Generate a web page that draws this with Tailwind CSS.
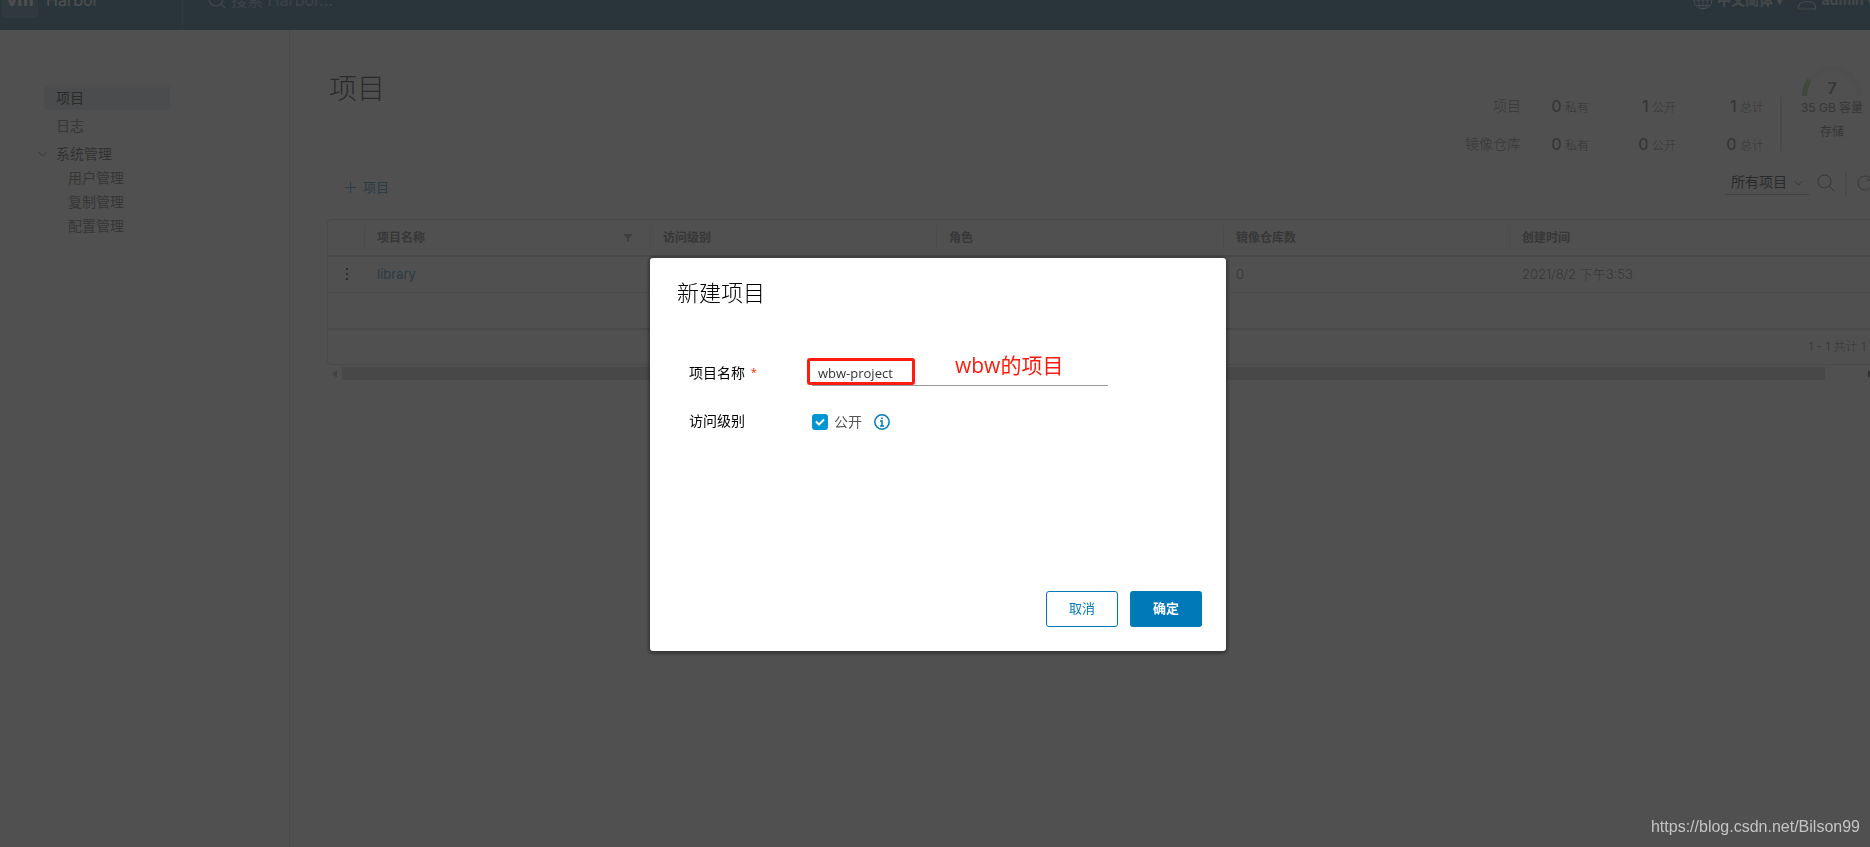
<!DOCTYPE html>
<html lang="zh-CN">
<head>
<meta charset="utf-8">
<title>Harbor</title>
<script src="https://cdn.jsdelivr.net/npm/@tailwindcss/browser@4"></script>
</head>
<body class="h-screen overflow-hidden bg-[#fafafa] font-['Inter','Noto_Sans_CJK_SC',sans-serif] text-sm text-[#565656]">
<div class="flex h-full flex-col">
  <header class="flex h-[30px] shrink-0 items-end overflow-hidden bg-[#004a70] text-[#fafafa]">
    <div class="flex h-[60px] w-[183px] items-center gap-2 border-r border-white/15 pl-[2px]">
      <span class="flex size-9 items-center justify-center rounded bg-white/15 text-lg font-bold">vm</span>
      <span class="text-base">Harbor</span>
    </div>
    <label class="flex h-[60px] flex-1 items-center gap-1 pl-6">
      <svg class="size-5" viewBox="0 0 20 20" fill="none" stroke="#fafafa" stroke-opacity=".7" stroke-width="1.2"><circle cx="9" cy="9" r="7"/><path d="M14 14l4 4"/></svg>
      <input class="w-60 bg-transparent text-base placeholder:text-white/50" placeholder="搜索 Harbor..." aria-label="搜索">
    </label>
    <button class="flex h-[60px] items-center gap-1 pr-[14px] font-bold text-white/70"><svg class="size-5" viewBox="0 0 20 20" fill="none" stroke="currentColor"><circle cx="10" cy="10" r="9"/><path d="M10 1v18M1 10h18M3 4.500h14M3 15.500h14"/><ellipse cx="10" cy="10" rx="4.500" ry="9"/></svg>中文简体 ▾</button>
    <button class="-mr-1 flex h-[60px] items-center gap-1 font-bold text-white/70"><svg class="size-5" viewBox="0 0 20 20" fill="none" stroke="currentColor" stroke-width="1.2"><circle cx="10" cy="5" r="4"/><path d="M1.500 19v-3c2-6 15-6 17 0v3z"/></svg>admin ▾</button>
  </header>
  <div class="flex min-h-0 flex-1">
    <nav class="w-[290px] shrink-0 border-r border-[#ccc] pt-14 pl-11 leading-6">
      <a href="#" class="block w-[126px] rounded-l-sm bg-[#d9e4ea] pl-3 text-black">项目</a>
      <a href="#" class="mt-1 block pl-3">日志</a>
      <button class="mt-1 -ml-[6px] flex items-center gap-[9px] text-[#333]"><svg class="h-2 w-[9px]" viewBox="0 0 9 8" fill="none" stroke="#565656"><path d="M.5 2l4 4 4-4"/></svg>系统管理</button>
      <a href="#" class="block pl-6">用户管理</a>
      <a href="#" class="block pl-6">复制管理</a>
      <a href="#" class="block pl-6">配置管理</a>
    </nav>
    <main class="min-w-0 flex-1 overflow-hidden pl-[37px]">
      <div class="flex h-[135px] justify-between">
        <h1 class="pt-[39px] pl-[2px] text-[28px] leading-10 font-light text-black">项目</h1>
        <div class="flex pt-9 whitespace-nowrap">
          <dl class="grid grid-cols-[56px_68px_87px_88px] grid-rows-[38px_38px] items-center pt-[21px] pr-4 text-right leading-6 font-light">
            <dt>项目</dt><dd class="text-xs"><b class="text-base leading-6 font-medium">0</b> 私有</dd><dd class="text-xs"><b class="text-base leading-6 font-medium">1</b> 公开</dd><dd class="text-xs"><b class="text-base leading-6 font-medium">1</b> 总计</dd>
            <dt>镜像仓库</dt><dd class="text-xs"><b class="text-base leading-6 font-medium">0</b> 私有</dd><dd class="text-xs"><b class="text-base leading-6 font-medium">0</b> 公开</dd><dd class="text-xs"><b class="text-base leading-6 font-medium">0</b> 总计</dd>
          </dl>
          <div class="mt-[31px] h-[54px] w-[2px] bg-[#ccc]"></div>
          <div class="flex w-[88px] flex-col items-center pl-3 text-xs">
            <div class="relative h-[30px] w-[60px]">
              <svg class="size-full" viewBox="0 0 60 30" fill="none" stroke-width="5"><path stroke="#eee" d="M2.500 30a27.500 27.500 0 0 1 55 0"/><path stroke="#60b515" stroke-opacity=".6" d="M2.500 30a27.500 27.500 0 0 1 5-16"/></svg>
              <span class="absolute inset-x-0 bottom-0 text-center text-base leading-4 font-semibold">7</span>
            </div>
            <span class="leading-6">35 GB 容量</span>
            <span class="leading-6">存储</span>
          </div>
        </div>
      </div>
      <div class="flex h-[54px] items-start justify-between">
        <button class="mt-[12px] ml-[18px] flex items-center gap-[7px] text-[13px] leading-5 text-[#0079b8]"><svg class="size-[11px]" viewBox="0 0 11 11" stroke="currentColor"><path d="M5.500 0v11M0 5.500h11"/></svg>项目</button>
        <div class="flex items-center pt-[6px]">
          <label class="relative block"><select aria-label="项目筛选" class="block h-[23px] w-[84px] appearance-none border-b border-[#8c8c8c] pb-1 pl-[6px] text-black"><option>所有项目</option></select>
            <svg class="pointer-events-none absolute top-[8px] right-[6px] h-2 w-[9px]" viewBox="0 0 9 8" fill="none" stroke="#565656"><path d="M.5 1l4 4 4-4"/></svg></label>
          <button aria-label="搜索" class="ml-2"><svg class="size-[18px]" viewBox="0 0 18 18" fill="none" stroke="#565656"><circle cx="7.500" cy="7.500" r="6.500"/><path d="M12.500 12.500l5 5"/></svg></button>
          <div class="ml-[10px] h-6 w-[2px] bg-[#ccc]"></div>
          <button aria-label="刷新" class="-mr-[3px] ml-[10px]"><svg class="size-4" viewBox="0 0 16 16" fill="none" stroke="#565656"><path d="M14 4.500A7 7 0 1 0 15 8M14 1v4h-4"/></svg></button>
        </div>
      </div>
      <div class="-mr-20 rounded border border-[#ccc]">
        <table class="w-full table-fixed border-collapse text-left">
          <colgroup><col class="w-[36px]"><col class="w-[286px]"><col class="w-[286px]"><col class="w-[287px]"><col class="w-[286px]"><col></colgroup>
          <thead><tr class="h-9 border-b-2 border-[#ccc] text-xs">
            <th></th>
            <th><div class="flex h-6 items-center justify-between border-l border-[#ddd] pr-[18px] pl-3">项目名称<svg class="size-2" viewBox="0 0 8 8" fill="#888"><path d="M0 0h8v1L5 4v4L3 7V4L0 1z"/></svg></div></th>
            <th><div class="h-6 border-l border-[#ddd] pl-3 leading-6">访问级别</div></th>
            <th><div class="h-6 border-l border-[#ddd] pl-3 leading-6">角色</div></th>
            <th><div class="h-6 border-l border-[#ddd] pl-3 leading-6">镜像仓库数</div></th>
            <th><div class="h-6 border-l border-[#ddd] pl-3 leading-6">创建时间</div></th>
          </tr></thead>
          <tbody class="text-[13px]">
            <tr class="h-9 border-b border-[#ddd]">
              <td><button aria-label="操作" class="ml-[18px] block"><svg class="h-[13px] w-[3px]" viewBox="0 0 3 13" fill="#222"><path d="M0 0h2v2H0zM0 5h2v2H0zM0 10h2v2H0z"/></svg></button></td>
              <td class="pl-[13px]"><a href="#" class="text-[#0079b8]">library</a></td><td></td><td></td><td class="pl-[13px] font-light">0</td><td class="pl-[13px] font-light">2021/8/2 下午3:53</td>
            </tr>
            <tr class="h-[37px] border-b-2 border-[#ccc]"><td colspan="6"></td></tr>
          </tbody>
        </table>
        <div class="flex h-[34px] items-center justify-end pr-11 text-xs font-light">1 - 1 共计 1 条记录</div>
      </div>
      <div class="mt-[2px] -mr-[5px] flex h-[13px] items-center justify-between">
        <svg class="ml-1 size-2 shrink-0" viewBox="0 0 8 8" fill="#999"><path d="M6 0v8L1 4z"/></svg>
        <div class="mr-[42px] ml-[3px] h-full flex-1 bg-[#c8c8c8]"></div>
        <svg class="size-2 shrink-0" viewBox="0 0 8 8" fill="#222"><path d="M1 0v8l4-4z"/></svg>
      </div>
    </main>
  </div>
</div>

<div class="fixed inset-0 flex items-start justify-center bg-[#313131]/85 pt-[258px] pl-[6px]">
  <div role="dialog" aria-labelledby="dlg-title" class="flex min-h-[393px] w-[576px] flex-col rounded-[3px] bg-white px-6 pb-6 font-['Open_Sans','Noto_Sans_CJK_SC',sans-serif] text-black shadow-[0_1px_3px_2px_rgba(0,0,0,0.3)]">
    <h2 id="dlg-title" class="pt-[18px] pl-[3px] text-[22px] leading-8 font-light">新建项目</h2>
    <div class="mt-[50px] grid grid-cols-[123px_1fr] gap-y-4 pl-[15px] leading-6">
      <label for="name" class="pt-[3px]">项目名称 <span class="pl-[2px] align-[2px] text-[11px] leading-3 text-[#e62700]">*</span></label>
      <div class="relative">
        <input id="name" value="wbw-project" class="block h-7 w-[296px] border-b border-[#9a9a9a] pt-[2px] pl-[6px] text-[13px] text-[#333]">
        <div class="pointer-events-none absolute top-0 -left-[5px] h-[27px] w-[108px] rounded-[3px] border-[3px] border-[#ff1c0e]"></div>
        <span class="absolute -top-[5px] left-[143px] text-[21px] leading-6 text-[#ff1c0e]">wbw的项目</span>
      </div>
      <span class="pt-[7px]">访问级别</span>
      <div class="flex items-center pt-2 text-[#565656]">
        <span class="relative block size-4"><input id="public" type="checkbox" checked class="block size-4 appearance-none rounded-[3px] bg-[#0095d3]"><svg class="pointer-events-none absolute inset-0 size-4" viewBox="0 0 16 16" fill="none" stroke="#fff" stroke-width="2"><path d="M4 7.500l3 3 5-5"/></svg></span>
        <label for="public" class="pl-[6px]">公开</label>
        <button aria-label="说明" class="ml-3"><svg class="block size-4" viewBox="0 0 16 16" fill="none" stroke="#0079b8" stroke-width="1.500"><circle cx="8" cy="8" r="7.200"/><path d="M6 7h2v5M6 12h4M7.200 4.300h1.600"/></svg></button>
      </div>
    </div>
    <div class="mt-auto flex justify-end gap-3 text-[13px]">
      <button class="h-9 w-[72px] rounded-[3px] border border-[#0079b8] pb-[2px] text-[#0079b8]">取消</button>
      <button class="h-9 w-[72px] rounded-[3px] bg-[#0079b8] pb-[2px] font-bold text-white">确定</button>
    </div>
  </div>
</div>
<a href="https://blog.csdn.net/Bilson99" class="fixed right-[10px] bottom-2 font-['Liberation_Sans',sans-serif] text-base leading-6 text-[#c4c4c4]">https://blog.csdn.net/Bilson99</a>
</body>
</html>
